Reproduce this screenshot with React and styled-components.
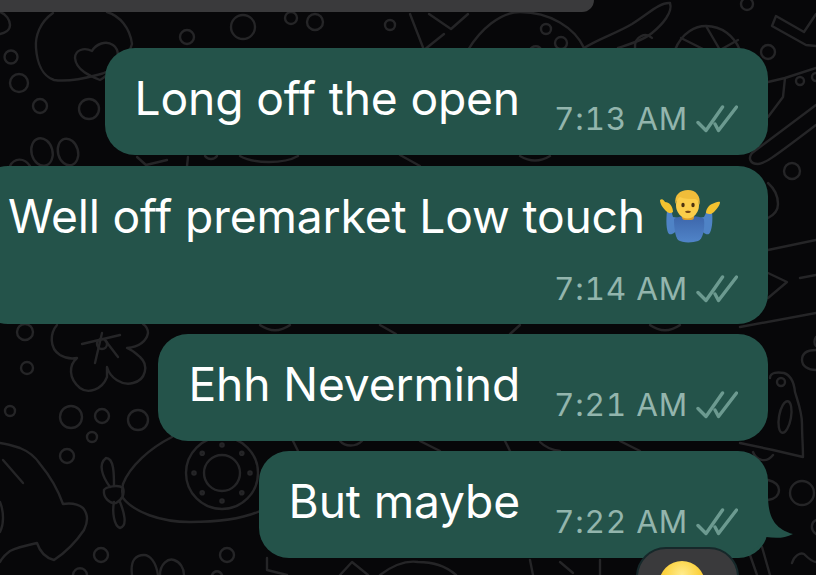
import React from 'react';
import styled, { createGlobalStyle } from 'styled-components';

const GlobalStyle = createGlobalStyle`
  html, body {
    margin: 0;
    padding: 0;
    background: #070709;
  }
  #root {
    width: 816px;
    height: 575px;
  }
`;

// ---- page ----
const Chat = styled.div`
  position: relative;
  width: 816px;
  height: 575px;
  overflow: hidden;
  background: #070709;
  font-family: Inter, "Liberation Sans", sans-serif;
`;

const Wallpaper = styled.svg`
  position: absolute;
  inset: 0;
  width: 816px;
  height: 575px;
  fill: none;
  stroke: #252527;
  stroke-width: 2.4;
  stroke-linecap: round;
  stroke-linejoin: round;
`;

const Thread = styled.div`
  position: relative;
  display: flex;
  flex-direction: column;
  align-items: flex-end;
  gap: 10.3px;
  padding-right: 48px;
`;

const TopBar = styled.div`
  align-self: flex-start;
  width: 594px;
  height: 12px;
  margin-bottom: 26.1px;
  background: #3a3a3c;
  border-bottom-right-radius: 24px;
`;

// ---- bubbles ----
const Bubble = styled.div`
  position: relative;
  flex: none;
  box-sizing: border-box;
  height: ${(p) => (p.$tall ? '158px' : '107px')};
  padding: 21px 30px 0 30px;
  background: #24534a;
  border-radius: 30px;
  white-space: nowrap;
`;

const Row = styled.div`
  display: flex;
  align-items: flex-start;
  gap: 34px;
`;

const MessageText = styled.div`
  display: flex;
  align-items: center;
  color: #ffffff;
  font-size: 46.2px;
  line-height: 58px;
  letter-spacing: -0.15px;
`;

const Meta = styled.div`
  display: flex;
  align-items: center;
  justify-content: flex-end;
  gap: 8px;
  margin-top: ${(p) => (p.$below ? '22px' : '28px')};
  color: #93b5ad;
  font-size: 31.5px;
  line-height: 44px;
  letter-spacing: 0.8px;
  font-variant-numeric: tabular-nums;
`;

const Tail = styled.svg`
  position: absolute;
  right: -26px;
  bottom: 0;
  width: 56px;
  height: 64px;
  fill: #24534a;
`;

const Reaction = styled.div`
  position: absolute;
  right: 29px;
  top: 96px;
  box-sizing: border-box;
  width: 103px;
  height: 60px;
  background: #3a3a3c;
  border: 2.5px solid #16282a;
  border-radius: 30px;
  overflow: hidden;
`;

const ReactionEmoji = styled.div`
  width: 46px;
  height: 46px;
  margin: 12px 0 0 21px;
  border-radius: 50%;
  background: radial-gradient(circle at 50% 30%, #ffec8f 0%, #fcd23f 45%, #f4a81e 100%);
`;

// ---- drawings ----
const ChecksSvg = styled.svg`
  flex: none;
  width: 42px;
  height: 28px;
  fill: none;
  stroke: #6c9a90;
  stroke-width: 3.4;
  stroke-linecap: round;
  stroke-linejoin: round;
`;

const Checks = () => (
  <ChecksSvg viewBox="0 0 42 28">
    <path d="M2 17.5L10 25.5L26.5 2" />
    <path d="M19 19L22.5 25.5L40.5 2" />
  </ChecksSvg>
);

const ShrugSvg = styled.svg`
  flex: none;
  width: 62px;
  height: 54px;
  margin: 0 16px 0 15px;
`;

const Shrug = () => (
  <ShrugSvg viewBox="0 0 62 54">
    <defs>
      <linearGradient id="shirt" x1="0" y1="0" x2="0" y2="1">
        <stop offset="0" stopColor="#3d66ab" />
        <stop offset="1" stopColor="#5084c8" />
      </linearGradient>
    </defs>
    {/* arms and body */}
    <path d="M7 22C6 30 6 42 9 45C12 46 16 44 18 38L19 29L13 28C12 25 12 24 12 22Z" fill="#4f83c6" />
    <path d="M52 23C53 31 52 42 49 45C46 46 42 44 40 38L39 29L44 28C45 26 46 24 46 23Z" fill="#4f83c6" />
    <path d="M14 30C18 26 40 26 44 30C45 40 43 50 38 52C32 54 22 54 18 51C15 47 14 38 14 30Z" fill="url(#shirt)" />
    {/* hands */}
    <path d="M0 11C2 9 4 11 5 13C9 13 13 17 13 23C11 25 8 24 6 22C3 19 0 15 0 11Z" fill="#f3c22f" />
    <path d="M60 13C58 12 55 14 52 15C49 16 46 20 46 24C49 26 52 25 54 23C57 20 60 16 60 13Z" fill="#f3c22f" />
    {/* neck and head */}
    <rect x="22" y="25" width="12" height="6" rx="3" fill="#d99c2a" />
    <ellipse cx="27.5" cy="16" rx="11.5" ry="13.5" fill="#fbcd4a" />
    <path
      d="M15.5 15C14 6 20 1 28 1C36 1 41 7 39.5 16C38.5 12 37 10 35 10C30 10 24 10 20 8C18 9 16.5 12 15.5 15Z"
      fill="#f0bd3a"
    />
    <ellipse cx="23" cy="16" rx="1.7" ry="2.2" fill="#4c3210" />
    <ellipse cx="33" cy="16" rx="1.7" ry="2.2" fill="#4c3210" />
    <path d="M25 22.5C26 21.5 30 21.5 31 22.5C30 24.5 26 24.5 25 22.5Z" fill="#7a4a16" />
  </ShrugSvg>
);

const Doodles = () => (
  <Wallpaper viewBox="0 0 816 575">
    {/* top left blob with heart */}
    <path d="M53 13C40 22 35 36 36 48C37 62 42 76 54 80C68 82 86 78 97 75C112 72 128 60 132 44C130 28 120 16 107 12" />
    <path d="M100 80C90 76 76 70 75 58C75 50 84 47 92 51C96 44 106 40 113 45C120 50 119 60 113 68C109 73 104 78 100 80Z" />
    <path d="M0 12C6 14 10 20 10 25C10 30 5 33 0 34" />
    <circle cx="11" cy="57" r="6.5" />
    <circle cx="19" cy="83" r="9" />
    <circle cx="40" cy="106" r="7" />
    <circle cx="89" cy="109" r="10" />
    <circle cx="187" cy="37" r="7" />
    <circle cx="243" cy="27" r="12" />
    <circle cx="291" cy="18" r="6" />
    <circle cx="315" cy="22" r="8" />
    <circle cx="390" cy="25" r="5" />
    <ellipse cx="42" cy="152" rx="10.5" ry="14" transform="rotate(-15 42 152)" />
    <ellipse cx="68" cy="152" rx="10" ry="13.5" transform="rotate(-15 68 152)" />
    <path d="M10 166C14 158 24 157 30 166" />
    {/* top middle */}
    <path d="M410 14L424 50" />
    <path d="M429 14L451 29L468 14" />
    <path d="M444 34L424 50" />
    <path d="M468 50C480 30 500 12 520 12C550 12 575 28 584 48" />
    <circle cx="546" cy="29" r="5" />
    <circle cx="561" cy="43" r="6" />
    <path d="M530 50C532 45 540 45 541 50" />
    <path d="M584 48C600 38 615 34 632 24C648 14 660 2 670 3C673 12 663 24 652 33C644 40 630 44 618 48" />
    <path d="M635 48C634 36 646 32 652 38" />
    <circle cx="747" cy="4" r="6" />
    <path d="M816 46L806 45L772 26L776 16L804 32L816 14" />
    <path d="M675 50C682 32 696 26 706 26C722 26 734 36 740 50" />
    <path d="M681 38L705 50" />
    <path d="M706 26L720 50L738 40" />
    <circle cx="768" cy="52" r="7" />
    {/* right edge */}
    <circle cx="800" cy="81" r="4" />
    <circle cx="816" cy="77" r="4" />
    <path d="M768 82L785 78L816 68" />
    <path d="M785 78L783 97L768 117" />
    <path d="M816 105L752 153C748 158 750 164 758 164C764 164 770 160 816 125" />
    <circle cx="792" cy="171" r="8" />
    <path d="M768 183C776 190 778 198 778 204C778 210 774 215 768 218" />
    <path d="M768 250L816 240" />
    <path d="M768 273L787 282L768 298" />
    <path d="M800 278L816 275" />
    <path d="M740 327L816 313" />
    <path d="M816 337C814 340 814 344 816 346" />
    <path d="M816 350C806 350 802 354 802 360C802 366 808 370 816 370" />
    {/* bird */}
    <circle cx="781" cy="382" r="4" />
    <path d="M770 378C770 372 778 372 784 373C790 375 794 382 795 392C798 402 802 412 802 424C802 436 803 446 803 457L773 450L740 443" />
    <ellipse cx="785" cy="417" rx="6" ry="16" transform="rotate(10 785 417)" />
    <path d="M753 452C756 460 766 464 773 455" />
    <circle cx="802" cy="493" r="12" />
    <path d="M768 480C776 482 779 486 779 490C779 495 775 499 768 500" />
    <path d="M816 520C811 522 810 530 816 534" />
    <path d="M792 563C794 556 800 552 804 554C808 558 812 562 816 562" />
    <path d="M762 547L770 575" />
    <path d="M750 555L757 575" />
    {/* flower */}
    <path d="M57 325C50 333 49 348 60 355C65 358 72 359 77 358C69 365 68 378 80 388C88 394 102 390 107 377L107 367C110 378 122 386 133 383C146 380 149 365 140 357C136 353 132 350 127 348C136 347 146 343 148 333C148 329 146 326 143 324" />
    <circle cx="102" cy="344" r="5" />
    <path d="M82 344L120 335" />
    <path d="M95 363L102 333" />
    <path d="M105 340L118 357" />
    <circle cx="25" cy="332" r="8" />
    <circle cx="27" cy="368" r="6" />
    <circle cx="10" cy="411" r="5" />
    <circle cx="71" cy="417" r="11" />
    <circle cx="102" cy="416" r="7" />
    <circle cx="138" cy="420" r="10" />
    <circle cx="92" cy="437" r="5" />
    <circle cx="67" cy="456" r="7" />
    {/* hand */}
    <path d="M0 443C8 444 14 446 20 448C30 452 36 458 40 464C50 476 58 490 63 504C70 503 78 504 83 508C88 514 88 522 84 530C76 542 66 552 54 560C46 558 40 552 37 543C28 545 18 547 10 551C6 554 2 558 0 562" />
    <path d="M3 460L23 483" />
    <path d="M0 502C4 512 4 524 0 532" />
    <circle cx="101" cy="555" r="7" />
    <circle cx="227" cy="555" r="7" />
    <path d="M73 575C74 566 86 566 87 575" />
    <path d="M132 575C130 560 136 555 144 555C150 555 156 562 158 575" />
    <path d="M160 575C160 564 168 558 174 560C180 562 184 568 184 575" />
    <path d="M212 575C214 570 220 570 222 575" />
    {/* candy and donut */}
    <path d="M123 484C130 466 150 448 172 437" />
    <path d="M123 498C134 512 160 522 190 522C216 522 242 520 262 510" />
    <path d="M123 484C122 488 122 494 123 498" />
    <path d="M104 490C106 487 118 484 123 488C125 494 122 500 116 503C110 504 103 498 104 490Z" />
    <path d="M110 487C102 476 98 464 106 458C114 458 114 474 114 486" />
    <path d="M114 502C112 512 114 526 120 528C128 526 124 512 120 502" />
    <circle cx="222" cy="473" r="36" />
    <circle cx="222" cy="473" r="18" />
    {[0, 45, 90, 135, 180, 225, 270, 315].map((a) => (
      <circle
        key={a}
        cx={222 + 28 * Math.cos((a * Math.PI) / 180)}
        cy={473 + 28 * Math.sin((a * Math.PI) / 180)}
        r="1.6"
      />
    ))}
    {/* bottom row */}
    <path d="M267 558L267 570L287 575" />
    <path d="M340 575L352 562L368 575" />
    <path d="M380 575C392 566 404 560 418 562C432 562 446 566 456 575" />
    <path d="M530 560L533 575" />
    <path d="M560 562L573 573" />
    <path d="M600 560L600 575" />
    {/* gaps between bubbles */}
    <path d="M137 157L146 165L167 160" />
    <path d="M188 157L187 166" />
    <path d="M205 156C208 160 214 160 217 156" />
    <path d="M240 156C254 164 284 164 298 156" />
    <path d="M400 155L420 166" />
    <path d="M520 156C530 162 540 162 550 156" />
    <path d="M260 325C270 332 280 332 290 325" />
    <path d="M380 325L396 334" />
    <path d="M520 325L510 334" />
    <path d="M650 325C660 332 670 332 680 325" />
    <path d="M293 441L298 451" />
    <path d="M340 441C345 447 356 447 362 441" />
    <path d="M420 441L440 451" />
    <path d="M505 441L510 451" />
    <path d="M540 442C546 448 552 450 560 451" />
    <path d="M620 441L640 451" />
  </Wallpaper>
);

const App = () => {
  return (
    <Chat>
      <GlobalStyle />
      <Doodles />
      <Thread>
        <TopBar />

        <Bubble>
          <Row>
            <MessageText>Long off the open</MessageText>
            <Meta>
              7:13 AM
              <Checks />
            </Meta>
          </Row>
        </Bubble>

        <Bubble $tall>
          <MessageText>
            Well off premarket Low touch
            <Shrug />
          </MessageText>
          <Meta $below>
            7:14 AM
            <Checks />
          </Meta>
        </Bubble>

        <Bubble>
          <Row>
            <MessageText>Ehh Nevermind</MessageText>
            <Meta>
              7:21 AM
              <Checks />
            </Meta>
          </Row>
        </Bubble>

        <Bubble>
          <Row>
            <MessageText>But maybe</MessageText>
            <Meta>
              7:22 AM
              <Checks />
            </Meta>
          </Row>
          <Tail viewBox="0 0 56 64">
            <path d="M0 0H30C30 16 32 34 55 40C46 45 36 44 28 43C20 55 8 62 0 64Z" />
          </Tail>
          <Reaction>
            <ReactionEmoji />
          </Reaction>
        </Bubble>
      </Thread>
    </Chat>
  );
};

export default App;
